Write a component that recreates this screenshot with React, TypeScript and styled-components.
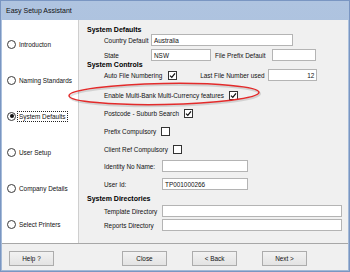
import React from 'react';
import styled, { createGlobalStyle } from 'styled-components';

const GlobalStyle = createGlobalStyle`
  html, body {
    margin: 0;
    padding: 0;
    width: 350px;
    height: 272px;
    overflow: hidden;
    background: #ffffff;
    font-family: "Liberation Sans", Arial, sans-serif;
  }
`;

const Window = styled.div`
  position: relative;
  width: 350px;
  height: 272px;
  box-sizing: border-box;
  border: 1px solid #7a96c2;
  padding: 0 1px 1px 1px;
  background: linear-gradient(#afc4e0, #a2b8d6);
  display: flex;
  flex-direction: column;
`;

const TitleBar = styled.div`
  height: 19px;
  display: flex;
  align-items: center;
  padding-left: 4px;
  font-size: 7px;
  color: #111;
`;

const Body = styled.div`
  flex: 1;
  display: flex;
  flex-direction: column;
  background: #f0f0f0;
`;

const Content = styled.div`
  height: 223px;
  display: flex;
`;

const Nav = styled.div`
  width: 77px;
  background: #ffffff;
  border-right: 1px solid #cfcfcf;
  display: flex;
  flex-direction: column;
  padding-top: 6px;
  box-sizing: border-box;
`;

const NavItem = styled.div`
  height: 36.2px;
  display: flex;
  align-items: center;
  padding-left: 5px;
  gap: 2px;
`;

const Radio = styled.span<{ $checked?: boolean }>`
  position: relative;
  width: 9px;
  height: 9px;
  box-sizing: border-box;
  border-radius: 50%;
  border: 1px solid #3a3a3a;
  background: #ffffff;

  &::after {
    content: '';
    display: ${(p) => (p.$checked ? 'block' : 'none')};
    position: absolute;
    left: 1.5px;
    top: 1.5px;
    width: 4px;
    height: 4px;
    border-radius: 50%;
    background: #111;
  }
`;

const NavLabel = styled.span<{ $focused?: boolean }>`
  font-size: 6.4px;
  color: #111;
  padding: 1px 1px;
  outline: ${(p) => (p.$focused ? '1px dotted #222' : 'none')};
  outline-offset: 0;
`;

const Main = styled.div`
  flex: 1;
  display: flex;
  flex-direction: column;
  padding: 4px 0 0 8px;
`;

const Heading = styled.div<{ $h: number; $mt?: number }>`
  height: ${(p) => p.$h}px;
  margin-top: ${(p) => p.$mt ?? 0}px;
  display: flex;
  align-items: center;
  font-size: 7px;
  font-weight: bold;
  color: #000;
`;

const Row = styled.div<{ $mt?: number }>`
  height: 12px;
  margin-top: ${(p) => p.$mt ?? 0}px;
  display: flex;
  align-items: center;
  padding-left: 17px;
`;

const Label = styled.span<{ $w?: number; $ml?: number }>`
  font-size: 6.4px;
  color: #111;
  white-space: nowrap;
  width: ${(p) => (p.$w ? `${p.$w}px` : 'auto')};
  margin-left: ${(p) => p.$ml ?? 0}px;
  flex-shrink: 0;
`;

const Input = styled.div<{ $w: number; $right?: boolean }>`
  width: ${(p) => p.$w}px;
  height: 12px;
  box-sizing: border-box;
  border: 1px solid #b4b4b4;
  background: #ffffff;
  font-size: 6.4px;
  color: #111;
  display: flex;
  align-items: center;
  justify-content: ${(p) => (p.$right ? 'flex-end' : 'flex-start')};
  padding: 0 2px;
  flex-shrink: 0;
`;

const Box = styled.span<{ $ml?: number }>`
  width: 9px;
  height: 9px;
  box-sizing: border-box;
  border: 1px solid #333;
  background: #ffffff;
  margin-left: ${(p) => p.$ml ?? 5}px;
  display: flex;
  align-items: center;
  justify-content: center;
  flex-shrink: 0;
`;

const Footer = styled.div`
  flex: 1;
  border-top: 1px solid #a7a7a7;
  display: flex;
  align-items: flex-start;
  padding: 7px 41px 0 7px;
`;

const ButtonGroup = styled.div`
  margin-left: auto;
  display: flex;
  gap: 25px;
`;

const Button = styled.div`
  width: 45px;
  height: 15px;
  box-sizing: border-box;
  border: 1px solid #acacac;
  background: linear-gradient(#f2f2f2, #e3e3e3);
  font-size: 6.4px;
  color: #111;
  display: flex;
  align-items: center;
  justify-content: center;
`;

const Annotation = styled.svg`
  position: absolute;
  left: 62px;
  top: 77px;
  pointer-events: none;
`;

const Check: React.FC<{ checked?: boolean; ml?: number }> = ({ checked, ml }) => (
  <Box $ml={ml}>
    {checked && (
      <svg width="7" height="7" viewBox="0 0 7 7">
        <path d="M1 3.6 L2.8 5.4 L6 1.4" fill="none" stroke="#111" strokeWidth="1.3" />
      </svg>
    )}
  </Box>
);

const steps = [
  'Introducton',
  'Naming Standards',
  'System Defaults',
  'User Setup',
  'Company Details',
  'Select Printers',
];

export default function App() {
  return (
    <>
      <GlobalStyle />
      <Window>
        <TitleBar>Easy Setup Assistant</TitleBar>
        <Body>
          <Content>
            <Nav>
              {steps.map((s) => (
                <NavItem key={s}>
                  <Radio $checked={s === 'System Defaults'} />
                  <NavLabel $focused={s === 'System Defaults'}>{s}</NavLabel>
                </NavItem>
              ))}
            </Nav>
            <Main>
              <Heading $h={10}>System Defaults</Heading>
              <Row>
                <Label $w={47}>Country Default</Label>
                <Input $w={142}>Australia</Input>
              </Row>
              <Row $mt={3}>
                <Label $w={47}>State</Label>
                <Input $w={60}>NSW</Input>
                <Label $w={57} $ml={4}>File Prefix Default</Label>
                <Input $w={44} />
              </Row>
              <Heading $h={7}>System Controls</Heading>
              <Row $mt={1}>
                <Label>Auto File Numbering</Label>
                <Check checked ml={6} />
                <Label $w={68} $ml={23}>Last File Number used</Label>
                <Input $w={49} $right>12</Input>
              </Row>
              <Row $mt={8}>
                <Label>Enable Multi-Bank Multi-Currency features</Label>
                <Check checked />
              </Row>
              <Row $mt={6}>
                <Label>Postcode - Suburb Search</Label>
                <Check checked />
              </Row>
              <Row $mt={6}>
                <Label>Prefix Compulsory</Label>
                <Check />
              </Row>
              <Row $mt={6}>
                <Label>Client Ref Compulsory</Label>
                <Check />
              </Row>
              <Row $mt={5}>
                <Label $w={58}>Identity No Name:</Label>
                <Input $w={86} />
              </Row>
              <Row $mt={6}>
                <Label $w={58}>User Id:</Label>
                <Input $w={86}>TP001000266</Input>
              </Row>
              <Heading $h={8} $mt={4}>System Directories</Heading>
              <Row $mt={3}>
                <Label $w={58}>Template Directory</Label>
                <Input $w={180} />
              </Row>
              <Row $mt={2}>
                <Label $w={58}>Reports Directory</Label>
                <Input $w={180} />
              </Row>
            </Main>
          </Content>
          <Footer>
            <Button>Help ?</Button>
            <ButtonGroup>
              <Button>Close</Button>
              <Button>&lt; Back</Button>
              <Button>Next &gt;</Button>
            </ButtonGroup>
          </Footer>
        </Body>
        <Annotation width="204" height="32" viewBox="0 0 204 32">
          <ellipse cx="102" cy="17.5" rx="95" ry="10.5" fill="none" stroke="rgba(0,0,0,0.12)" strokeWidth="2.2" transform="rotate(-1 102 17.5)" />
          <ellipse cx="101" cy="16" rx="95" ry="10.5" fill="none" stroke="#e32b2b" strokeWidth="1.5" transform="rotate(-1 101 16)" />
        </Annotation>
      </Window>
    </>
  );
}
